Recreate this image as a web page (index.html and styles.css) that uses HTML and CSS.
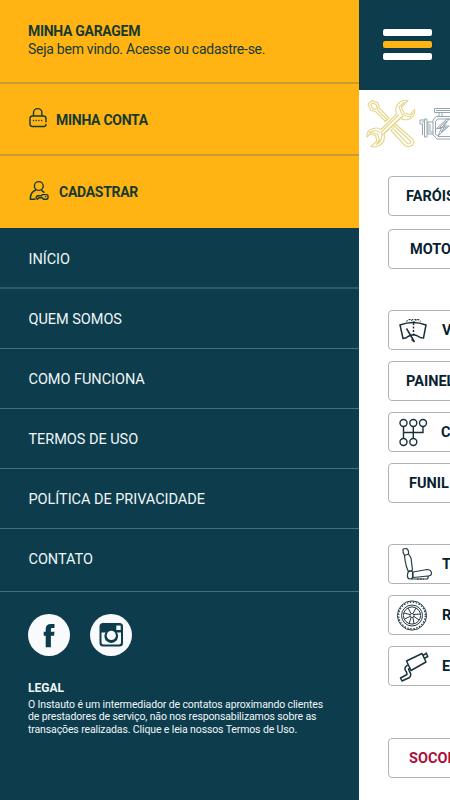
FILE: index.html
```html
<!DOCTYPE html>
<html lang="pt-BR">
<head>
<meta charset="utf-8">
<title>Instauto</title>
<link rel="stylesheet" href="styles.css">
</head>
<body>
<div class="app">
  <aside class="drawer">
    <section class="account">
      <div class="welcome">
        <h1>MINHA GARAGEM</h1>
        <p>Seja bem vindo. Acesse ou cadastre-se.</p>
      </div>
      <a class="account-link">
        <svg width="20" height="22" viewBox="0 0 20 22" fill="none" stroke="#173a2d" stroke-width="1.4" stroke-linecap="round">
          <path d="M5.5 9V5.800a4.200 4.200 0 0 1 8.400 0V9M18 14.800V11.500a2.500 2.500 0 0 0-2.500-2.500H4.500A2.500 2.500 0 0 0 2 11.500v5.500A2.500 2.500 0 0 0 4.500 19.500H16A2 2 0 0 0 18 17.500"/>
          <path d="M5.500 13.500h.1M8.200 13.500h.1M10.900 13.500h.1M13.600 13.500h.1"/>
        </svg>
        <span>MINHA CONTA</span>
      </a>
      <a class="account-link register">
        <svg width="22" height="22" viewBox="0 0 22 22" fill="none" stroke="#173a2d" stroke-width="1.4" stroke-linecap="round" stroke-linejoin="round">
          <circle cx="10.800" cy="6" r="4.400"/>
          <path d="M7.800 10C4.300 11.300 2.300 14.500 2.300 19.200H7M13.500 10.200l2.500 2.200"/>
          <path d="M14.500 14.600H18.500Q20 14.600 20 16V17.700Q20 19.200 18.500 19.200H15.500L14.200 17.700H11L9.400 19.200 8 17.500 9.400 15.700H13.300Z"/>
          <path d="M17.500 16.800h.1"/>
        </svg>
        <span>CADASTRAR</span>
      </a>
    </section>
    <nav class="menu">
      <a>INÍCIO</a>
      <a>QUEM SOMOS</a>
      <a>COMO FUNCIONA</a>
      <a>TERMOS DE USO</a>
      <a>POLÍTICA DE PRIVACIDADE</a>
      <a>CONTATO</a>
    </nav>
    <footer class="footer">
      <div class="social">
        <svg width="42" height="42" viewBox="0 0 42 42">
          <circle cx="21" cy="21" r="21" fill="#f8fafb"/>
          <path d="M17.700 33.200V21.700H15.700V17.700H17.700V15.500C17.700 11.800 19.500 10 23 10H26.500V14H24.300C23.200 14 22.900 14.500 22.900 15.600V17.700H26.500L26.100 21.700H22.900V33.200Z" fill="#0d3d4d"/>
        </svg>
        <svg width="42" height="42" viewBox="0 0 42 42">
          <circle cx="21" cy="21" r="21" fill="#f8fafb"/>
          <rect x="9.500" y="9" width="23.500" height="23.500" rx="3.500" fill="#0d3d4d"/>
          <path d="M11.500 18.500H15.500A6.800 6.800 0 1 0 27 18.500H31V28.500A2 2 0 0 1 29 30.500H13.500A2 2 0 0 1 11.500 28.500Z" fill="#f8fafb"/>
          <circle cx="21.300" cy="21.400" r="4.600" fill="#f8fafb"/>
          <rect x="26.300" y="11.500" width="4.400" height="4.500" rx=".6" fill="#f8fafb"/>
        </svg>
      </div>
      <h2>LEGAL</h2>
      <p>O Instauto é um intermediador de contatos aproximando clientes<br>de prestadores de serviço, não nos responsabilizamos sobre as<br>transações realizadas. Clique e leia nossos Termos de Uso.</p>
    </footer>
  </aside>
  <main class="page">
    <header class="topbar"><i></i><i class="mid"></i><i></i></header>
    <div class="tools">
      <svg width="50" height="50" viewBox="0 0 50 50" fill="none" stroke-linejoin="round" stroke-linecap="round">
        <g stroke="#e6d68a" stroke-width="1.100">
          <path d="M2 5L6 1.500 12 4 13.500 9.500 23 19 19.500 22.500 10 13 4.500 11ZM5 5.500L7 4 10.500 6 11.500 9.500 8.500 10.500 6 8.500ZM11.500 11L21 20.500"/>
          <path d="M30 25.500L46.500 40Q49 43 46.500 46 43 49 39 46.500L25 31.500ZM29.500 28L45 42.500M28 30.500L41.500 44.500Q44.500 45.500 44.500 42.500"/>
          <path d="M42 1.500L35.500 8 38 14 44 15.500 48.500 10.500Q49.500 17 43.500 20 38 22 34.500 19L18 34.500Q20 43 12.500 47 8 48.500 5 47.500L11 42 9.500 36.500 4 35 1 38Q0 31.500 7 29.500 12 28 15 30.500L30.500 15Q28 8 34 3 38 .500 42 1.500Z"/>
          <path d="M38 3.500L33 8 36 15.500 44 18 47 14M32.500 16L15.500 33Q17 41 11.500 45M3 34Q7 30 14 33M37 17L16.500 36M4 33.500L11.500 35 13.500 41 10 46"/>
        </g>
      </svg>
      <svg width="32" height="34" viewBox="0 0 32 34" fill="none" stroke="#93a6ae" stroke-width="1">
        <path d="M32 1.500H15.500V5.500H32M17 3.500H32M20 6V9.500M23 6V9.500M32 9.500H17L14 13V28L18 32H32M32 12H18.500L16.500 14.500V27L19 29.500H32"/>
        <path d="M14 15H9V27H14M11 17V25H14M8 12H5.500V30H8ZM5 13H1V17H3.500V28M5 15H3M8 16H9M8 25H9"/>
        <path d="M28 12L17.500 21.500H22.500L19 29 30 19H25L30 12ZM27 14.500L20.500 20.500H25L22.500 25 27.500 20H23.500L28 14"/>
      </svg>
    </div>
    <div class="group">
      <button class="text-a">FARÓIS</button>
      <button class="text-b second">MOTO</button>
    </div>
    <div class="group">
      <button><svg width="52" height="38" viewBox="0 0 52 38" fill="none" stroke="#18303a" stroke-width="1.500">
        <path d="M11 14Q24 9 37 14L34.500 27Q31 27 29.500 25.500 24.500 22 19 25.500 17 27.500 14 27.500Z"/><path d="M17.500 17.500L25.500 31M22.500 28.500L25.500 31"/><path d="M24.500 12V26" stroke-dasharray="2 1.500"/><path d="M17.500 10.500Q20 6.500 24.500 11 29 6.500 31.500 10.500M20 8.500H29.500" stroke-dasharray="1.500 1.200" stroke-width="1.100"/></svg><span>V</span></button>
      <button class="text-a">PAINEL</button>
      <button><svg width="52" height="38" viewBox="0 0 52 38" fill="none" stroke="#18303a" stroke-width="1.400">
        <circle cx="14.500" cy="10" r="3.500"/><circle cx="24.300" cy="10" r="3.500"/><circle cx="34" cy="10" r="3.500"/><circle cx="14.500" cy="29" r="3.500"/><circle cx="24.300" cy="29" r="3.500"/><path d="M14.500 13.500V25.500M24.300 13.500V25.500M34 13.500V19.500H14.500"/></svg><span class="c">C</span></button>
      <button class="text-c">FUNIL</button>
    </div>
    <div class="group">
      <button><svg width="52" height="38" viewBox="0 0 52 38" fill="none" stroke="#273b43" stroke-width="1.200" stroke-linejoin="round">
        <path d="M14 4L17.500 3.500Q20 5 19.500 9L15.500 10.500Q13.500 8 14 4ZM15.500 10.500L19.500 9 22 13 23.500 25 19.500 27Q17 22 16 15ZM19 27Q19 25.500 21 25.800L23.500 26.500V31Q24 34 21 34 18 33.500 18.500 30ZM24 27L38 24.500Q42 24.500 42.500 28 42.500 31 39 31L24 32.500ZM22 34H38.500L39.500 31.500"/><path d="M28 34H35" stroke-dasharray="2 1"/></svg><span>T</span></button>
      <button><svg width="52" height="38" viewBox="0 0 52 38" fill="none" stroke="#263a42" stroke-width="1">
        <circle cx="23" cy="19.500" r="14.600"/><circle cx="23" cy="19.500" r="13.300" stroke-width="1.200" stroke-dasharray="1.500 1.500"/><circle cx="23" cy="19.500" r="10.500"/><circle cx="23" cy="19.500" r="8.600"/><circle cx="23" cy="19.500" r="2"/>
        <path d="M22 17.500L19 12M24 17.500L27 12M25 18.500L31 18M25 20.500L30 24M24 21.500L25 28M22 21.500L20 28M21 20.500L15.500 23M21 18.500L15 17"/></svg><span>R</span></button>
      <button><svg width="52" height="38" viewBox="0 0 52 38" fill="none" stroke="#1d333c" stroke-width="1.500" stroke-linejoin="round">
        <path d="M17.500 14L33 6.500 37 15 22 23.500ZM33.500 8.500L37.500 6.500M35 11.500L39 9.500M37 5.500L39 10M18.500 18L16.500 20Q15 22 17.500 25L18 27.500 11.500 31 13 34 20.500 30.500Q23 28 20.500 24.500L19.500 22 21.500 20.500"/></svg><span>E</span></button>
    </div>
    <div class="group help"><button class="text-c">SOCOR</button></div>
  </main>
</div>
</body>
</html>
```

FILE: styles.css
```css
* { box-sizing: border-box; }
body { margin: 0; font-family: Roboto, "Liberation Sans", sans-serif; background: #fff; }
h1, h2, p { margin: 0; }
svg { display: block; flex-shrink: 0; }
.app { display: grid; grid-template-columns: 359px 91px; width: 450px; height: 800px; overflow: hidden; }

.drawer { display: flex; flex-direction: column; height: 800px; background: #0d3d4d; color: #f0f6f7; }
.account { height: 228px; background: #ffb414; color: #173a2d; }
.welcome { height: 84px; padding: 22px 0 0 28px; border-bottom: 2px solid #c69b30; }
.welcome h1 { font-size: 14px; line-height: 18px; font-weight: 700; letter-spacing: -.3px; }
.welcome p { font-size: 14px; line-height: 18px; letter-spacing: -.26px; }
.account-link { display: flex; align-items: center; height: 72px; padding-left: 28px; border-bottom: 2px solid #c69b30; font-size: 14px; font-weight: 700; letter-spacing: -.28px; }
.account-link svg { margin-bottom: 3px; }
.account-link span { margin-left: 8px; padding-top: 1px; }
.account-link.register { border-bottom: 0; }
.account-link.register svg { margin-bottom: 2px; }
.account-link.register span { margin-left: 9px; padding-top: 0; }

.menu a { display: flex; align-items: center; height: 60px; padding: 2px 0 0 28.5px; border-bottom: 1px solid #3b7381; font-size: 14.5px; letter-spacing: -.03px; }
.menu a:first-child { height: 61px; padding-top: 3px; border-bottom: 2px solid #285a6a; }
.menu a:last-child { height: 63px; padding: 0 0 2px 28.5px; }

.footer { padding: 22px 0 0 28px; }
.social { display: flex; gap: 20px; }
.footer h2 { margin-top: 24px; font-size: 12px; line-height: 16px; font-weight: 700; }
.footer p { margin-top: 3px; font-size: 10.5px; line-height: 12.3px; letter-spacing: -.125px; white-space: nowrap; }

.page { height: 800px; overflow: hidden; background: #fff; }
.topbar { display: flex; flex-direction: column; gap: 5px; height: 90px; padding: 29px 0 0 24px; background: #0d3d4d; }
.topbar i { width: 49px; height: 7px; border-radius: 2px; background: #fff; box-shadow: 0 0 1px #021923; }
.topbar .mid { background: #ffb414; }
.tools { display: flex; align-items: center; gap: 3px; height: 86px; padding: 0 0 18px 7px; }
.group { display: flex; flex-direction: column; align-items: flex-start; gap: 11px; margin-left: 29px; margin-bottom: 41px; }
.group button { display: flex; align-items: center; width: 140px; height: 40px; padding: 0; border: 1px solid #adb3b6; border-radius: 4px; background: #fff; color: #071f2e; font-family: inherit; font-size: 14.5px; font-weight: 700; flex-shrink: 0; }
.group button span { margin-left: 1px; }
.group button span.c { margin-left: 0; }
.group .second { margin-top: 2px; }
.group .text-a { padding-left: 17px; }
.group .text-b { padding-left: 21px; }
.group .text-c { padding-left: 20px; }
.group.help { margin-top: 52px; }
.help button { color: #a90f3d; }
```
